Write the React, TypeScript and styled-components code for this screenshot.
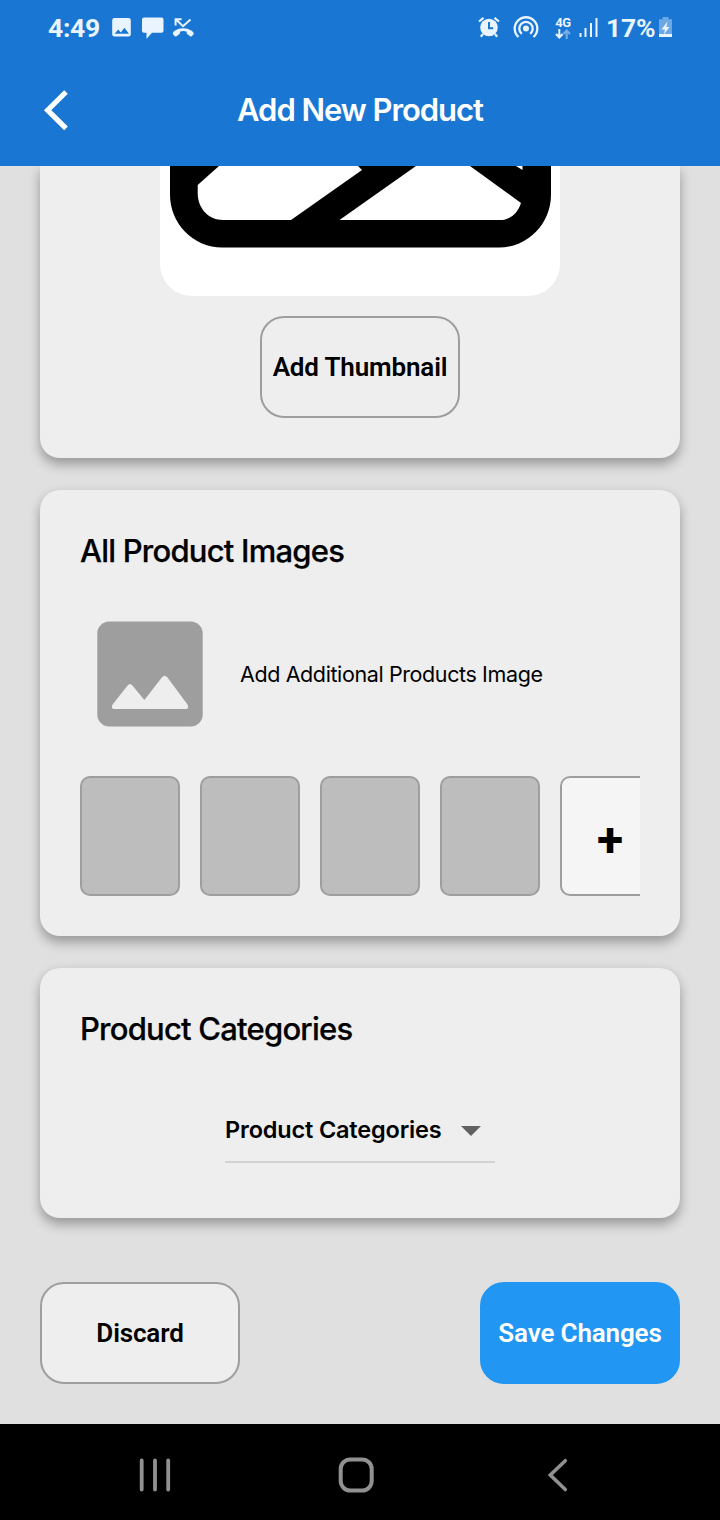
import React from "react";
import styled, { createGlobalStyle } from "styled-components";

const GlobalStyle = createGlobalStyle`
  * { box-sizing: border-box; }
  body { margin: 0; background: #e0e0e0; }
  button { font: inherit; color: inherit; padding: 0; margin: 0; }
`;

const Screen = styled.div`
  width: 720px;
  height: 1520px;
  display: flex;
  flex-direction: column;
  overflow: hidden;
  background: #e0e0e0;
  color: #000;
  font-family: Inter, "Liberation Sans", sans-serif;
`;

const Header = styled.header`
  flex: none;
  height: 166px;
  background: #1976d2;
  color: #fff;
`;

const StatusBar = styled.div`
  height: 56px;
  padding: 0 47px 0 48px;
  display: flex;
  justify-content: space-between;
  color: #eaf4ff;
  font-family: Roboto, sans-serif;
`;

const StatusGroup = styled.div`
  display: flex;
  align-items: center;
`;

const StatusText = styled.span<{ $width: number; $spacing?: number }>`
  width: ${(p) => p.$width}px;
  font-size: 26.5px;
  line-height: 56px;
  font-weight: 700;
  letter-spacing: ${(p) => p.$spacing ?? 0}px;
  white-space: nowrap;
`;

const StatusIcon = styled.svg`
  display: block;
  flex: none;
  height: 56px;
`;

const Network = styled.div`
  width: 18px;
  margin-left: 15px;
  padding-bottom: 2px;
  display: flex;
  flex-direction: column;
  align-items: center;
  font-size: 13px;
  line-height: 13px;
  font-weight: 700;
  letter-spacing: -0.5px;
`;

const TitleBar = styled.div`
  height: 108px;
  display: grid;
  grid-template-columns: 112px 1fr 112px;
  align-items: center;
`;

const BackButton = styled.button`
  height: 108px;
  border: 0;
  background: none;
`;

const Title = styled.h1`
  margin: 0;
  text-align: center;
  font-size: 31px;
  line-height: 40px;
  font-weight: 600;
  letter-spacing: -1.05px;
`;

const Content = styled.main`
  flex: 1;
  min-height: 0;
  padding: 0 40px;
  overflow: hidden;
`;

const Card = styled.section<{ $height: number; $first?: boolean }>`
  height: ${(p) => p.$height}px;
  margin-bottom: 32px;
  padding: ${(p) => (p.$first ? "0" : "40px")};
  border-radius: ${(p) => (p.$first ? "0 0 20px 20px" : "20px")};
  background: #eeeeee;
  box-shadow: 0 7px 12px rgba(0, 0, 0, 0.28), 0 1px 12px rgba(0, 0, 0, 0.06);
`;

const ThumbnailCard = styled(Card)`
  display: flex;
  flex-direction: column;
  align-items: center;
  gap: 20px;
`;

const Thumbnail = styled.div`
  width: 400px;
  height: 130px;
  overflow: hidden;
  border-radius: 0 0 32px 32px;
  background: #fff;
`;

const ActionButton = styled.button<{ $primary?: boolean }>`
  width: 200px;
  height: 102px;
  border: 2px solid ${(p) => (p.$primary ? "#2196f3" : "#9e9e9e")};
  border-radius: 24px;
  background: ${(p) => (p.$primary ? "#2196f3" : "#eeeeee")};
  color: ${(p) => (p.$primary ? "#fff" : "#000")};
  font-family: Roboto, sans-serif;
  font-size: 26px;
  font-weight: 600;
  letter-spacing: -0.15px;
  white-space: nowrap;
`;

const CardTitle = styled.h2`
  margin: 0;
  font-size: 31px;
  line-height: 42px;
  font-weight: 500;
  letter-spacing: -0.78px;
  -webkit-text-stroke: 0.25px currentColor;
`;

const AddImageRow = styled.div`
  display: flex;
  align-items: center;
  gap: 20px;
  height: 140px;
  margin-top: 32px;
  font-size: 21.5px;
  letter-spacing: -0.39px;
`;

const TileStrip = styled.div`
  display: flex;
  gap: 20px;
  margin-top: 32px;
  overflow: hidden;
`;

const Tile = styled.div<{ $add?: boolean }>`
  flex: none;
  width: 100px;
  height: 120px;
  display: flex;
  align-items: center;
  justify-content: center;
  padding-top: ${(p) => (p.$add ? "6px" : "0")};
  border: 2px solid #9e9e9e;
  border-radius: 10px;
  background: ${(p) => (p.$add ? "#f5f5f5" : "#bdbdbd")};
  font-family: Roboto, sans-serif;
  font-size: 48px;
  font-weight: 700;
`;

const Select = styled.div`
  width: 270px;
  height: 65px;
  margin: 48px auto 0;
  padding-right: 14px;
  display: flex;
  align-items: center;
  justify-content: space-between;
  border-bottom: 2px solid #d2d2d2;
  font-size: 23.5px;
  font-weight: 600;
  letter-spacing: -0.17px;
  white-space: nowrap;

  svg {
    margin-top: 2px;
  }
`;

const Actions = styled.div`
  display: flex;
  justify-content: space-between;
  margin-top: 64px;
`;

const NavBar = styled.nav`
  flex: none;
  height: 96px;
  display: grid;
  grid-template-columns: 34px 36px 22px;
  column-gap: 166px;
  align-items: center;
  padding: 6px 0 0 138px;
  background: #000;

  svg:last-child {
    margin-left: 7px;
  }
`;

export default function App() {
  return (
    <Screen>
      <GlobalStyle />
      <Header>
        <StatusBar>
          <StatusGroup>
            <StatusText $width={64} $spacing={-0.3}>4:49</StatusText>
            <StatusIcon width="84" viewBox="112 0 84 56" fill="currentColor">
              <path fillRule="evenodd" d="M114.5 18h14a2.3 2.3 0 0 1 2.3 2.3v14a2.3 2.3 0 0 1-2.3 2.3h-14a2.3 2.3 0 0 1-2.3-2.3v-14a2.3 2.3 0 0 1 2.3-2.3zM114.600 33.800h14.400l-4.600-6-3.600 4.600-2.600-3z" />
              <path d="M144 17.600h17.500a2 2 0 0 1 2 2v11.200a2 2 0 0 1-2 2h-9.500l-5.500 6v-6h-2.500a2 2 0 0 1-2-2v-11.200a2 2 0 0 1 2-2z" />
              <path d="M173.200 34.500c-.8-.8-.3-2.500 1.500-3.700 5-3.300 12-3.300 17 0 1.800 1.200 2.500 2.900 1.700 3.700l-1.700 1.800c-.4.4-.9.400-1.300.1l-3.200-2.300c-.4-.3-.5-.7-.5-1.200v-1.200c-2.200-.8-4.600-.8-6.800 0v1.200c0 .5-.1.900-.5 1.200l-3.200 2.300c-.4.300-.9.300-1.300-.1z" />
              <path d="M190.500 19.500l-7.500 6.700-6.500-6.200M175.600 25.500v-6.200h6" fill="none" stroke="currentColor" strokeWidth="2" />
            </StatusIcon>
          </StatusGroup>
          <StatusGroup>
            <StatusIcon width="62" viewBox="477 0 62 56" fill="none" stroke="currentColor">
              <circle cx="489" cy="27.500" r="8.800" fill="currentColor" stroke="none" />
              <path d="M479 21.500l4.500-3.700M499 21.500l-4.500-3.700M483 34l-2.200 2.700M495 34l2.200 2.700" strokeWidth="2.200" />
              <path d="M489 22v6.200h4.200" stroke="#1976d2" strokeWidth="2" />
              <circle cx="526" cy="28.600" r="3" fill="currentColor" stroke="none" />
              <path d="M521.800 33.800a6.700 6.700 0 1 1 8.400 0M518.500 37a11.300 11.300 0 1 1 15 0" strokeWidth="2.300" />
            </StatusIcon>
            <Network>
              <span>4G</span>
              <svg width="16" height="10" viewBox="0 0 16 10" fill="none" stroke="currentColor" strokeWidth="2">
                <path d="M4.300 0v8M1 5l3.300 3.500L7.600 5" />
                <path d="M11.700 10V2M8.400 5l3.300-3.500L15 5" opacity=".45" />
              </svg>
            </Network>
            <StatusIcon width="34" viewBox="571 0 34 56" fill="currentColor">
              <path d="M578.500 33h2v4h-2zM583.500 28h2v9h-2zM589 23h2v14h-2zM594.500 18h2v19h-2z" />
            </StatusIcon>
            <StatusText $width={52} $spacing={-0.2}>17%</StatusText>
            <StatusIcon width="15" viewBox="658 0 15 56" fill="currentColor">
              <path d="M662.500 17h6v2.300h3.500v14.700h-13V19.300h3.500z" opacity=".4" />
              <path d="M659 34h13v3h-13zM667.500 21.500l-6 8h3.500l-1.200 5 5.700-7.500h-3.200z" />
            </StatusIcon>
          </StatusGroup>
        </StatusBar>
        <TitleBar>
          <BackButton aria-label="Back">
            <svg width="112" height="108" viewBox="0 56 112 108" fill="none" stroke="#fff" strokeWidth="5.200">
              <path d="M66 92L47.600 110.200L66 128.400" />
            </svg>
          </BackButton>
          <Title>Add New Product</Title>
        </TitleBar>
      </Header>

      <Content>
        <ThumbnailCard $height={292} $first>
          <Thumbnail>
            <svg width="400" height="130" viewBox="160 166 400 130">
              <path d="M170 160V194a52 53 0 0 0 52 53.500H499a52 53 0 0 0 52-53.500V160z" />
              <g fill="#fff">
                <path d="M219 166L197.700 185V193C197.700 209 209 220 223 220H291L362 170L358 166z" />
                <path d="M416 166L339.500 220H500C510 220 518 213 521 203L470 166z" />
                <path d="M516 166H522.500V170z" />
              </g>
            </svg>
          </Thumbnail>
          <ActionButton>Add Thumbnail</ActionButton>
        </ThumbnailCard>

        <Card $height={446}>
          <CardTitle>All Product Images</CardTitle>
          <AddImageRow>
            <svg width="140" height="140" viewBox="80 604 140 140">
              <rect x="97.300" y="621.500" width="105.400" height="105" rx="12" fill="#9e9e9e" />
              <path d="M112.600 704.500L127.600 685.500Q130 682.500 132.400 685.500L144.400 700L162 677.300Q164.700 674.300 167.300 677.300L187.500 704.500Q189.500 709 185.500 709H114.500Q110.500 709 112.600 704.500z" fill="#eee" />
            </svg>
            <span>Add Additional Products Image</span>
          </AddImageRow>
          <TileStrip>
            <Tile />
            <Tile />
            <Tile />
            <Tile />
            <Tile $add>+</Tile>
          </TileStrip>
        </Card>

        <Card $height={250}>
          <CardTitle>Product Categories</CardTitle>
          <Select>
            <span>Product Categories</span>
            <svg width="20" height="10" viewBox="0 0 20 10">
              <path d="M0 0h20L10 10z" fill="#616161" />
            </svg>
          </Select>
        </Card>

        <Actions>
          <ActionButton>Discard</ActionButton>
          <ActionButton $primary>Save Changes</ActionButton>
        </Actions>
      </Content>

      <NavBar>
        <svg width="34" height="36" viewBox="138 1457 34 36" stroke="#919191" strokeWidth="3.800" strokeLinecap="round">
          <path d="M141.700 1460.500V1489.500M155 1460.500V1489.500M168.200 1460.500V1489.500" />
        </svg>
        <svg width="36" height="36" viewBox="338 1457 36 36" fill="none" stroke="#919191" strokeWidth="4">
          <rect x="340.700" y="1459.500" width="31" height="31" rx="9.500" />
        </svg>
        <svg width="22" height="36" viewBox="547 1457 22 36" fill="none" stroke="#919191" strokeWidth="3.600" strokeLinecap="round">
          <path d="M565.300 1460.700L550.300 1475L565.300 1489.500" />
        </svg>
      </NavBar>
    </Screen>
  );
}
